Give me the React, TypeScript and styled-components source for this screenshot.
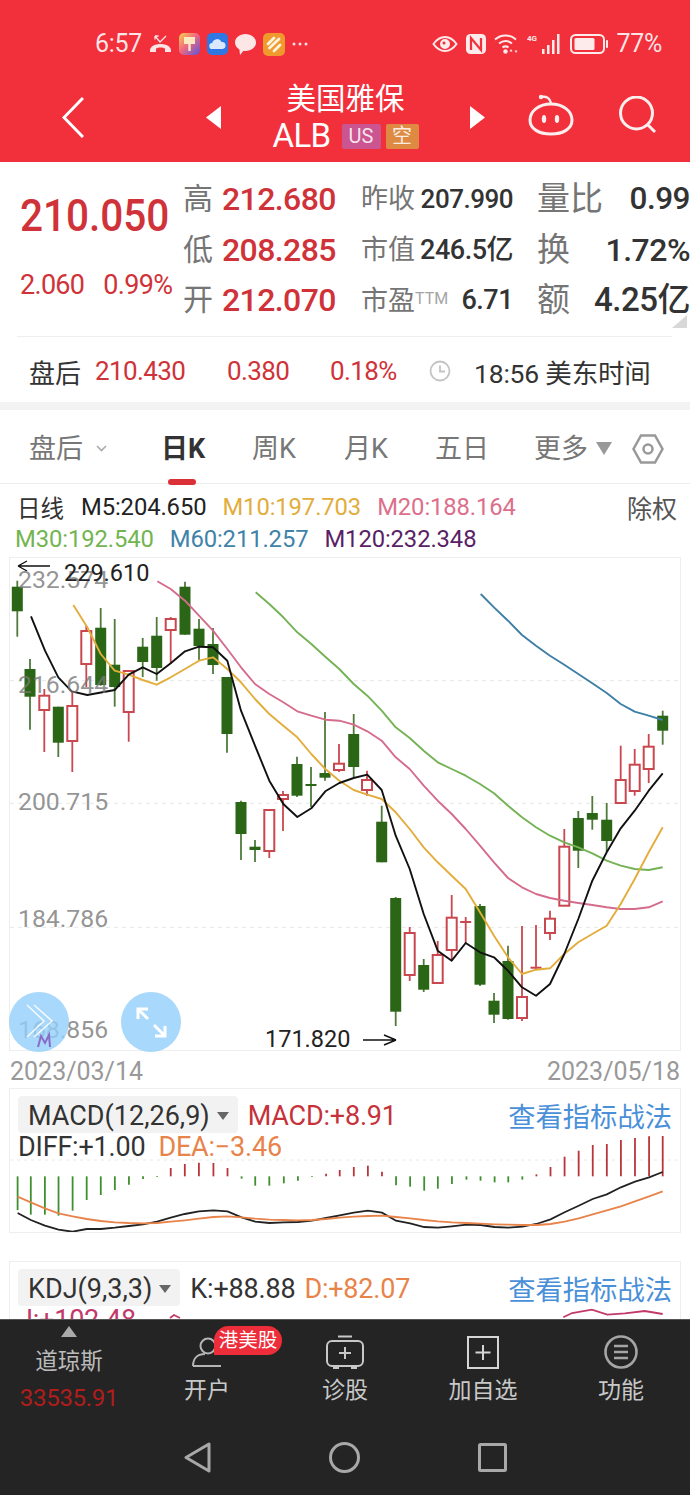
import { FC } from 'react';
import styled, { createGlobalStyle } from 'styled-components';

type Pt = [number, number];
type Candle = [number, number, number, number, number, 'g' | 'r'];

const zoomPts = (ox: number, oy: number, pts: Pt[], sx = 3, sy = 3): Pt[] =>
  pts.map(([x, y]) => [ox + x / sx, oy + y / sy]);

const toPath = (pts: Pt[]) => pts.map(([x, y]) => `${x.toFixed(1)},${y.toFixed(1)}`).join(' ');

const candles: Candle[] = [
  [17.3, 581.7, 637.7, 587.7, 612.3, 'g'],
  [30, 660, 730.7, 670, 697.7, 'g'],
  [44.3, 690, 753, 696.7, 711, 'r'],
  [58.3, 707.7, 758, 707.7, 743.7, 'g'],
  [72.3, 693, 773, 707, 742, 'r'],
  [86.3, 626.7, 688, 632, 665, 'r'],
  [100.7, 609, 686.7, 628.7, 686, 'g'],
  [114.7, 620, 707.7, 665.7, 688, 'g'],
  [128.7, 671.7, 742.7, 672, 713, 'r'],
  [142.7, 639, 678, 647.7, 663, 'g'],
  [156.7, 618, 681.7, 636.7, 669, 'g'],
  [170.7, 618, 665, 620, 631, 'r'],
  [185, 582.7, 635.7, 587.7, 635.7, 'g'],
  [199, 620, 661, 629.7, 647, 'g'],
  [213, 629, 675, 645, 666, 'g'],
  [227, 678, 753.7, 678, 735, 'g'],
  [241, 801.7, 861, 803, 835, 'g'],
  [255, 841, 863, 847.7, 851, 'g'],
  [269.3, 811, 859, 811, 852, 'r'],
  [283, 792, 832, 796, 800, 'r'],
  [297, 757.7, 798, 765, 796.7, 'g'],
  [311, 768, 808, 785, 787, 'g'],
  [325, 713, 781.7, 774, 778.7, 'g'],
  [339, 745, 773, 764.7, 771, 'r'],
  [353.7, 715, 778, 735, 768, 'g'],
  [367, 771.7, 796.7, 781, 791, 'r'],
  [381.7, 806.7, 863.3, 822.7, 863.3, 'g'],
  [395.7, 898, 1027, 899, 1012.7, 'g'],
  [409.7, 928, 982, 934, 976, 'r'],
  [423.7, 960, 993, 966, 990.7, 'g'],
  [437.7, 942, 984, 956, 984, 'r'],
  [451.7, 896, 961.7, 918.7, 951, 'r'],
  [465.7, 918, 945, 922, 924, 'r'],
  [480, 905, 987, 907, 985.7, 'g'],
  [494, 994, 1024, 1001.7, 1015.7, 'g'],
  [508, 946.7, 1020.7, 962, 1020, 'g'],
  [522, 927, 1022, 998, 1019, 'r'],
  [536, 926, 970, 967.7, 969.7, 'r'],
  [550, 911.7, 941, 919.7, 934, 'r'],
  [564.3, 830, 906.7, 847.7, 906.7, 'r'],
  [578.3, 812, 869, 819, 851.7, 'g'],
  [592.3, 797, 830.7, 814, 820.7, 'g'],
  [606.7, 804, 853, 820.7, 842, 'g'],
  [620.7, 746.7, 805, 781, 804, 'r'],
  [634.7, 750, 796.7, 765.7, 792, 'r'],
  [648.7, 735, 784, 747.7, 770, 'r'],
  [662.7, 711.7, 745.7, 716.7, 731.7, 'g']
];

const m5 = [
  ...zoomPts(0, 555, [[93, 187], [135, 290], [175, 370], [215, 412], [262, 423], [344, 408], [386, 362], [428, 340], [470, 360], [512, 328], [555, 292], [597, 278], [639, 280], [682, 320], [723, 470], [765, 575], [808, 680], [850, 750], [892, 789], [934, 763], [976, 712], [1018, 687]]),
  ...zoomPts(345, 555, [[26, 672], [67, 662], [110, 708]]),
  ...zoomPts(345, 780, [[152, 170], [194, 270], [236, 405], [278, 515], [320, 545], [362, 492], [405, 520], [447, 535], [489, 575], [531, 625], [573, 650], [615, 615], [658, 525], [700, 420], [742, 305], [785, 220], [827, 148], [869, 95], [911, 35]]),
  ...zoomPts(345, 555, [[953, 658]])
];

const m10 = [
  ...zoomPts(0, 555, [[220, 153], [262, 220], [302, 300], [344, 350], [386, 362], [428, 378], [470, 392], [512, 370], [555, 345], [597, 320], [639, 310], [682, 345], [723, 385], [765, 435], [808, 480], [850, 515], [892, 550], [934, 600], [976, 645], [1018, 680]]),
  ...zoomPts(345, 555, [[26, 708], [67, 722], [110, 735], [152, 775]]),
  ...zoomPts(345, 780, [[194, 150], [236, 205], [278, 250], [320, 290], [362, 330], [405, 400], [447, 470], [489, 535], [531, 585], [573, 572], [615, 568], [658, 525], [700, 490], [742, 465], [785, 440], [827, 375], [869, 300], [911, 220], [953, 145]])
];

const m20 = [
  ...zoomPts(0, 555, [[472, 82], [512, 105], [555, 140], [597, 185], [639, 230], [682, 285], [723, 340], [765, 390], [808, 420], [850, 445], [892, 472], [934, 485], [976, 497], [1018, 500]]),
  ...zoomPts(345, 555, [[26, 512], [67, 532], [110, 560], [152, 610], [194, 645], [236, 695], [278, 740], [320, 780]]),
  ...zoomPts(345, 780, [[362, 150], [405, 200], [447, 250], [489, 297], [531, 325], [573, 345], [615, 357], [658, 365], [700, 372], [742, 378], [785, 385], [827, 390], [869, 390], [911, 385], [953, 367]])
];

const m30 = [
  ...zoomPts(0, 555, [[767, 115], [808, 150], [850, 190], [892, 235], [934, 270], [976, 308], [1018, 345]]),
  ...zoomPts(345, 555, [[26, 390], [67, 425], [110, 470], [152, 520], [194, 552], [236, 590], [278, 625], [320, 645], [362, 665], [405, 690], [447, 718], [489, 755], [531, 790], [573, 820], [615, 845], [658, 865], [700, 880]]),
  ...zoomPts(345, 780, [[742, 223], [785, 245], [827, 260], [869, 270], [911, 273], [953, 265]])
];

const m60 = zoomPts(345, 555, [[407, 120], [447, 160], [489, 200], [531, 243], [573, 275], [615, 305], [658, 332], [700, 360], [742, 388], [785, 417], [827, 450], [869, 473], [911, 485], [953, 498]]);

const macdZero = 277;
const macdBars: Pt[] = [[40, 378], [70, 392], [102, 392], [133, 395], [165, 380], [197, 348], [229, 333], [261, 318], [293, 302], [325, 285], [357, 279], [388, 252], [420, 240], [452, 236], [485, 237], [517, 252], [549, 284], [580, 305], [612, 305], [645, 298], [677, 290], [709, 279], [741, 269], [772, 258], [804, 249], [836, 245], [868, 263], [900, 304], [932, 308], [964, 320], [995, 314], [1027, 300], [1060, 287], [1092, 290], [1124, 295], [1155, 295], [1187, 287], [1219, 271], [1251, 249], [1283, 218], [1315, 200], [1347, 183], [1379, 180], [1411, 168], [1443, 162], [1475, 157], [1506, 156]];
const diffLine: Pt[] = [[40, 387], [70, 408], [102, 425], [133, 437], [165, 443], [197, 435], [229, 435], [261, 431], [293, 426], [325, 421], [357, 413], [388, 401], [420, 390], [452, 382], [485, 379], [517, 382], [549, 400], [580, 413], [612, 417], [645, 415], [677, 414], [709, 410], [741, 402], [772, 394], [804, 386], [836, 380], [868, 386], [900, 410], [932, 418], [964, 429], [995, 431], [1027, 427], [1060, 422], [1092, 423], [1124, 429], [1155, 431], [1187, 428], [1219, 420], [1251, 406], [1283, 385], [1315, 365], [1347, 345], [1379, 331], [1411, 310], [1443, 293], [1475, 280], [1506, 264]];
const deaLine: Pt[] = [[40, 338], [70, 355], [102, 373], [133, 388], [165, 397], [197, 405], [229, 411], [261, 415], [293, 417], [325, 418], [357, 417], [388, 413], [420, 409], [452, 404], [485, 399], [517, 397], [549, 400], [580, 404], [612, 407], [645, 408], [677, 409], [709, 408], [741, 405], [772, 401], [804, 398], [836, 396], [868, 395], [900, 399], [932, 403], [964, 408], [995, 412], [1027, 415], [1060, 417], [1092, 419], [1124, 421], [1155, 422], [1187, 423], [1219, 423], [1251, 420], [1283, 413], [1315, 403], [1347, 391], [1379, 379], [1411, 367], [1443, 352], [1475, 337], [1506, 322]];
const kdjLine: Pt[] = [[1280, 700], [1300, 687], [1345, 677], [1380, 692], [1420, 688], [1465, 681], [1506, 690]];

const SX = 1568 / 690;
const mx = (x: number) => x / SX;
const my = (y: number) => 1085 + y / 3;
const macdPts = (pts: Pt[]): Pt[] => pts.map(([x, y]) => [mx(x), my(y)]);

const axisLabels = [
  { text: '232.574', y: 581 },
  { text: '216.644', y: 686 },
  { text: '200.715', y: 803 },
  { text: '184.786', y: 920 },
  { text: '168.856', y: 1031 }
];

const GlobalStyle = createGlobalStyle`
  html, body { margin: 0; padding: 0; background: #fff; }
  body { font-family: Roboto, "Noto Sans CJK SC", sans-serif; }
`;

const Screen = styled.div`
  width: 690px;
  height: 1495px;
  display: flex;
  flex-direction: column;
  overflow: hidden;
  background: #fff;
  font-family: Roboto, "Noto Sans CJK SC", sans-serif;
`;

const Content = styled.div`
  flex: 1;
  min-height: 0;
  overflow: hidden;
`;

const Header = styled.header`
  height: 162px;
  box-sizing: border-box;
  background: #f2303c;
  color: #fff;
`;

const StatusBar = styled.div`
  height: 80px;
  box-sizing: border-box;
  padding: 26px 28px 18px 95px;
  display: flex;
  justify-content: space-between;
  align-items: center;
`;

const StatusGroup = styled.div<{ $gap: number }>`
  display: flex;
  align-items: center;
  gap: ${(p) => p.$gap}px;
`;

const StatusText = styled.span`
  font-size: 25px;
  line-height: 36px;
  color: rgba(255, 255, 255, 0.88);
  letter-spacing: -0.3px;
`;

const NavRow = styled.div`
  height: 74px;
  display: grid;
  grid-template-columns: 206px 279px 205px;
  align-items: center;
`;

const NavLeft = styled.div`
  padding-left: 62px;
  display: flex;
  align-items: center;
`;

const NavRight = styled.div`
  padding: 0 0 5px 43px;
  display: flex;
  align-items: center;
  gap: 45px;
`;

const NavCenter = styled.div`
  display: flex;
  justify-content: space-between;
  align-items: center;
`;

const Titles = styled.div`
  display: flex;
  flex-direction: column;
  align-items: center;
`;

const StockName = styled.div`
  font-size: 29.5px;
  line-height: 38px;
  color: #fff;
`;

const TickerRow = styled.div`
  display: flex;
  align-items: center;
  height: 36px;
  gap: 5px;
`;

const Ticker = styled.span`
  font-size: 33px;
  line-height: 36px;
  margin-right: 6px;
  letter-spacing: -0.6px;
`;

const Tag = styled.span<{ $bg: string; $w: number }>`
  width: ${(p) => p.$w}px;
  height: 25px;
  line-height: 25px;
  text-align: center;
  font-size: 20px;
  background: ${(p) => p.$bg};
  color: rgba(255, 255, 255, 0.85);
  border-radius: 2px;
`;

const Quote = styled.section`
  position: relative;
  height: 174px;
  box-sizing: border-box;
  padding-top: 12px;
  display: flex;
`;

const QuoteMain = styled.div`
  width: 183px;
  flex: none;
  box-sizing: border-box;
  padding-left: 20px;
`;

const BigPrice = styled.div`
  margin-top: 17px;
  font-size: 45px;
  line-height: 50px;
  font-weight: 500;
  color: #cf3339;
  white-space: nowrap;
  transform: scaleX(0.9);
  transform-origin: left center;
`;

const Change = styled.div`
  margin-top: 26px;
  display: flex;
  gap: 19px;
  font-size: 27px;
  line-height: 36px;
  color: #cf3339;
  letter-spacing: -0.7px;
  white-space: nowrap;
`;

const StatGrid = styled.div`
  flex: 1;
  display: grid;
  grid-template-columns: 178px 176px 153px;
  grid-auto-rows: 50.5px;
  align-items: center;
`;

const StatCell = styled.div<{ $w?: number; $between?: boolean }>`
  display: flex;
  align-items: center;
  white-space: nowrap;
  ${(p) => (p.$w ? `width: ${p.$w}px;` : '')}
  ${(p) => (p.$between ? 'justify-content: space-between;' : 'gap: 9px;')}
`;

const StatLabel = styled.span<{ $size: number }>`
  font-size: ${(p) => p.$size}px;
  line-height: 44px;
  color: #757575;
`;

const Ttm = styled.span`
  font-size: 16px;
  vertical-align: 6px;
  color: #a5a5a5;
`;

const RedValue = styled.span`
  font-size: 32px;
  line-height: 44px;
  font-weight: 500;
  color: #cf3339;
  letter-spacing: -0.6px;
`;

const DarkValue = styled.span<{ $size: number }>`
  font-size: ${(p) => p.$size}px;
  line-height: 44px;
  font-weight: 500;
  color: #333;
  letter-spacing: -0.5px;
`;

const CornerMark = styled.i`
  position: absolute;
  right: 3px;
  top: 153px;
  width: 0;
  height: 0;
  border-style: solid;
  border-width: 0 0 13px 15px;
  border-color: transparent transparent #d8d8d8 transparent;
`;

const Divider = styled.div`
  height: 1px;
  margin: 0 18px 0 17px;
  background: #eeeeee;
`;

const AfterRow = styled.div`
  height: 65px;
  box-sizing: border-box;
  padding: 3px 0 0 29px;
  display: flex;
  align-items: center;
  white-space: nowrap;
`;

const AfterLabel = styled.span`
  width: 66px;
  font-size: 26px;
  color: #333;
`;

const AfterValue = styled.span<{ $w: number }>`
  width: ${(p) => p.$w}px;
  font-size: 26px;
  color: #cf3339;
  letter-spacing: -0.6px;
`;

const AfterTime = styled.span`
  margin-left: 23px;
  font-size: 26.5px;
  color: #333;
  letter-spacing: -0.2px;
`;

const Band = styled.div`
  height: 8px;
  background: #f3f3f3;
`;

const Tabs = styled.nav`
  height: 74px;
  box-sizing: border-box;
  padding: 4px 0 0 29px;
  display: grid;
  grid-template-columns: 132px 91px 92px 91px 99px 98px auto;
  align-items: center;
  border-bottom: 1px solid #eeeeee;
`;

const Tab = styled.div<{ $active?: boolean }>`
  position: relative;
  display: flex;
  align-items: center;
  font-size: 27px;
  line-height: 40px;
  white-space: nowrap;
  color: ${(p) => (p.$active ? '#333' : '#777')};
  font-weight: ${(p) => (p.$active ? 700 : 400)};
  ${(p) =>
    p.$active
      ? `&::after {
    content: '';
    position: absolute;
    left: 7px;
    bottom: -16px;
    width: 28px;
    height: 6px;
    border-radius: 3px;
    background: #dc3038;
  }`
      : ''}
`;

const Legend = styled.div`
  height: 73px;
  box-sizing: border-box;
  padding-top: 7px;
`;

const LegendRow = styled.div<{ $left: number; $gap: number }>`
  height: 32px;
  padding-left: ${(p) => p.$left}px;
  padding-right: 13px;
  display: flex;
  align-items: center;
  gap: ${(p) => p.$gap}px;
  white-space: nowrap;
`;

const LegendTitle = styled.span`
  font-size: 23.5px;
  color: #333;
  margin-right: 1px;
`;

const LegendValue = styled.span<{ $color: string }>`
  font-size: 23.8px;
  color: ${(p) => p.$color};
  letter-spacing: -0.1px;
`;

const LegendAction = styled.span`
  margin-left: auto;
  font-size: 25px;
  color: #555;
`;

const ChartFrame = styled.div`
  position: relative;
  height: 494px;
  margin: 0 9px;
  box-sizing: border-box;
  border: 1px solid #eeeeee;
`;

const ChartSvg = styled.svg`
  display: block;
  width: 670px;
  height: 492px;
`;

const AxisLabel = styled.span<{ $y: number }>`
  position: absolute;
  left: 8px;
  top: ${(p) => p.$y - 559 - 14}px;
  font-size: 24.8px;
  line-height: 28px;
  color: rgba(120, 120, 120, 0.8);
`;

const ExtremeLabel = styled.span<{ $x: number; $y: number }>`
  position: absolute;
  left: ${(p) => p.$x - 10}px;
  top: ${(p) => p.$y - 559 - 14}px;
  font-size: 23.5px;
  line-height: 28px;
  color: #222;
`;

const FloatButton = styled.div<{ $x: number }>`
  position: absolute;
  left: ${(p) => p.$x - 40}px;
  bottom: -2px;
  width: 60px;
  height: 60px;
  border-radius: 50%;
  background: rgba(146, 206, 250, 0.8);
  display: flex;
  align-items: center;
  justify-content: center;
`;

const DateRow = styled.div`
  height: 37px;
  box-sizing: border-box;
  padding: 3px 10px 0;
  display: flex;
  justify-content: space-between;
  align-items: center;
  font-size: 25px;
  color: #999;
`;

const Panel = styled.div<{ $h: number; $gapTop?: number }>`
  position: relative;
  height: ${(p) => p.$h}px;
  margin: ${(p) => p.$gapTop ?? 0}px 9px 0;
  box-sizing: border-box;
  border: 1px solid #eeeeee;
  padding: 7px 8px 0 8px;
`;

const PanelHead = styled.div`
  position: relative;
  display: flex;
  align-items: center;
  height: 37px;
  white-space: nowrap;
`;

const Selector = styled.div`
  height: 37px;
  box-sizing: border-box;
  padding: 3px 9px 0 10px;
  display: flex;
  align-items: center;
  gap: 7px;
  background: #f2f2f2;
  border-radius: 4px;
  font-size: 27px;
  color: #333;
  margin-right: 10px;
`;

const DownMark = styled.i`
  width: 0;
  height: 0;
  border-style: solid;
  border-width: 8px 6px 0 6px;
  border-color: #666 transparent transparent transparent;
`;

const PanelValue = styled.span<{ $color: string; $mr?: number }>`
  font-size: 27px;
  line-height: 32px;
  padding-top: 3px;
  color: ${(p) => p.$color};
  margin-right: ${(p) => p.$mr ?? 13}px;
  letter-spacing: -0.2px;
`;

const PanelLink = styled.a`
  margin-left: auto;
  font-size: 27.3px;
  color: #4a90d9;
`;

const PanelValues = styled.div`
  position: relative;
  display: flex;
  height: 24px;
  align-items: center;
  white-space: nowrap;
`;

const PanelSvg = styled.svg`
  position: absolute;
  left: 0;
  top: 0;
  width: 670px;
`;

const BottomBar = styled.footer`
  height: 176px;
  flex: none;
  background: #242424;
  border-top: 1px solid #555;
  box-sizing: border-box;
`;

const BarRow = styled.div`
  height: 100px;
  display: grid;
  grid-template-columns: repeat(5, 138px);
`;

const IndexCell = styled.div`
  display: flex;
  flex-direction: column;
  align-items: center;
  padding-top: 6px;
`;

const UpMark = styled.i`
  width: 0;
  height: 0;
  border-style: solid;
  border-width: 0 8px 11px 8px;
  border-color: transparent transparent #aaa transparent;
`;

const IndexName = styled.span`
  margin-top: 8px;
  font-size: 22.5px;
  line-height: 32px;
  color: #bbb;
`;

const IndexValue = styled.span`
  margin-top: 6px;
  font-size: 24px;
  line-height: 30px;
  color: #b01d1d;
  letter-spacing: -0.3px;
`;

const BarItem = styled.div`
  display: flex;
  flex-direction: column;
  align-items: center;
  padding-top: 15px;
`;

const IconSlot = styled.div`
  position: relative;
  height: 34px;
  display: flex;
  align-items: center;
  justify-content: center;
`;

const BarLabel = styled.span`
  margin-top: 7px;
  font-size: 23px;
  line-height: 30px;
  color: #c8c8c8;
`;

const Badge = styled.span`
  position: absolute;
  left: 22px;
  top: -9px;
  width: 68px;
  height: 29px;
  border-radius: 15px 15px 15px 0;
  background: #ee2d3a;
  color: #fff;
  font-size: 19.5px;
  line-height: 29px;
  text-align: center;
  white-space: nowrap;
`;

const SystemRow = styled.div`
  height: 75px;
  display: flex;
  justify-content: center;
  align-items: center;
  gap: 118px;
`;

const MoreMark = styled.i`
  margin-left: 8px;
  width: 0;
  height: 0;
  border-style: solid;
  border-width: 13px 8.5px 0 8.5px;
  border-color: #999 transparent transparent transparent;
`;

const Candles: FC = () => (
  <>
    {candles.map(([x, wt, wb, bt, bb, kind]) => {
      const color = kind === 'g' ? '#2b6616' : '#c9474e';
      const wick = kind === 'g' ? '#4f7a3c' : '#c9474e';
      const thin = bb - bt < 4;
      return (
        <g key={x}>
          <line x1={x} x2={x} y1={wt} y2={wb} stroke={wick} strokeWidth={1.8} />
          {kind === 'g' || thin ? (
            <rect x={x - 5.5} y={bt} width={11} height={bb - bt} fill={color} />
          ) : (
            <rect x={x - 5} y={bt} width={10} height={bb - bt} fill="#fff" stroke={color} strokeWidth={2} />
          )}
        </g>
      );
    })}
  </>
);

const MissedCall = () => (
  <svg width="23" height="18" viewBox="0 0 23 18" fill="none" stroke="#fde3e3" strokeWidth="1.3">
    <path d="M6 1l5 6 6-6M6 1v3.500M6 1h3.500" />
    <path d="M1 15c1-8 20-8 21 0v2h-6v-3.500c-2-1.500-7-1.500-9 0V17H1z" fill="#fde3e3" stroke="none" />
  </svg>
);

const PaintApp = () => (
  <svg width="21" height="22" viewBox="0 0 21 22">
    <defs>
      <linearGradient id="paint" x1="0" y1="0" x2="1" y2="1">
        <stop offset="0" stopColor="#f6d24a" />
        <stop offset=".45" stopColor="#f26a80" />
        <stop offset="1" stopColor="#5a55d8" />
      </linearGradient>
    </defs>
    <rect width="21" height="22" rx="5" fill="url(#paint)" />
    <path d="M5 4h11v7H5zM9.300 11h2.400v7H9.300z" fill="#fdf6c8" opacity=".9" />
  </svg>
);

const CloudApp = () => (
  <svg width="21" height="22" viewBox="0 0 21 22">
    <rect width="21" height="22" rx="5" fill="#2f78e4" />
    <path d="M5.500 16a3 3 0 0 1-.3-6 5 5 0 0 1 9.400-1 3.500 3.500 0 0 1 .8 7z" fill="#dbe9ff" />
  </svg>
);

const ChatApp = () => (
  <svg width="21" height="21" viewBox="0 0 21 21">
    <path d="M10.500 0C16.300 0 21 3.700 21 8.500S16.300 17 10.500 17c-.7 0-1.400-.1-2-.2L5 21l-.6-5.600C1.700 13.900 0 11.400 0 8.500 0 3.700 4.700 0 10.500 0z" fill="#fde6e6" />
  </svg>
);

const NoteApp = () => (
  <svg width="22" height="23" viewBox="0 0 22 23">
    <rect width="22" height="23" rx="5" fill="#f09a2e" />
    <path d="M5 11l6-6M6.500 15L16 6M11 18l6-6" stroke="#fff3dc" strokeWidth="2.800" strokeLinecap="round" />
  </svg>
);

const Dots = () => (
  <svg width="16" height="4" viewBox="0 0 16 4" fill="rgba(255,255,255,.85)">
    <circle cx="2" cy="2" r="1.500" />
    <circle cx="8" cy="2" r="1.500" />
    <circle cx="14" cy="2" r="1.500" />
  </svg>
);

const Eye = () => (
  <svg width="26" height="16" viewBox="0 0 26 16" fill="none" stroke="#fdeaea" strokeWidth="2">
    <path d="M1.500 8C5 3 9 1 13 1s8 2 11.500 7C21 13 17 15 13 15S5 13 1.500 8z" />
    <circle cx="13" cy="8" r="4" fill="#fdeaea" />
    <circle cx="12" cy="7" r="1.500" fill="#f2303c" stroke="none" />
  </svg>
);

const Nfc = () => (
  <svg width="20" height="20" viewBox="0 0 20 20">
    <rect width="20" height="20" rx="4.500" fill="#fdeaea" />
    <path d="M5 16V4l10 12V4" fill="none" stroke="#f2303c" strokeWidth="2.200" />
  </svg>
);

const Wifi = () => (
  <svg width="25" height="20" viewBox="0 0 25 20" fill="none" stroke="#fdeaea" strokeWidth="2">
    <path d="M1 5.500c6-5.500 15-5.500 21 0M5 9.500c4-3 9-3 13 0M8.500 13.500c2-1.500 4-1.500 6 0" />
    <circle cx="11.500" cy="17.500" r="2.200" fill="#fdeaea" stroke="none" />
    <path d="M17 15l-1.500 2.500h3zM22 19l1.500-2.500h-3z" fill="#fdeaea" stroke="none" />
  </svg>
);

const SignalLabel = styled.text`
  font-size: 8px;
  font-weight: 700;
  fill: #fdeaea;
`;

const Signal = () => (
  <svg width="35" height="22" viewBox="0 0 35 22" fill="#fdeaea">
    <SignalLabel x="0" y="8">4G</SignalLabel>
    <rect x="15" y="16" width="2.500" height="5" />
    <rect x="20" y="12" width="2.500" height="9" />
    <rect x="25" y="7" width="2.500" height="14" />
    <rect x="30" y="1" width="2.500" height="20" />
  </svg>
);

const Battery = () => (
  <svg width="38" height="20" viewBox="0 0 38 20" fill="none">
    <rect x="1" y="1" width="33" height="18" rx="4.500" stroke="#fdeaea" strokeWidth="2" />
    <rect x="4.500" y="4" width="20" height="12" rx="1.500" fill="#fdeaea" />
    <rect x="36" y="6" width="2" height="8" rx="1" fill="#fdeaea" />
  </svg>
);

const BackArrow = () => (
  <svg width="22" height="41" viewBox="0 0 22 41" fill="none" stroke="#fff" strokeWidth="3">
    <path d="M21 1L2 20.500 21 40" />
  </svg>
);

const SideArrow: FC<{ $dir: 'l' | 'r' }> = ({ $dir }) => (
  <svg width="15" height="23" viewBox="0 0 15 23" fill="#fff">
    <path d={$dir === 'l' ? 'M15 0v23L0 11.500z' : 'M0 0v23l15-11.500z'} />
  </svg>
);

const RobotIcon = () => (
  <svg width="46" height="42" viewBox="0 0 46 42" fill="none" stroke="#fdeeee" strokeWidth="3">
    <path d="M13 3c6-1 9 1 10 7" strokeWidth="2.400" />
    <circle cx="13" cy="3" r="2.200" fill="#fdeeee" stroke="none" />
    <path d="M23 10c12 0 21 7 21 16 0 9-9 14-21 14S2 35 2 26c0-9 9-16 21-16z" />
    <ellipse cx="16" cy="25" rx="2.200" ry="4" fill="#fdeeee" stroke="none" />
    <ellipse cx="29" cy="25" rx="2.200" ry="4" fill="#fdeeee" stroke="none" />
  </svg>
);

const SearchIcon = () => (
  <svg width="38" height="38" viewBox="0 0 38 38" fill="none" stroke="#fdeeee" strokeWidth="3">
    <circle cx="17.500" cy="17" r="16" />
    <path d="M29 29l7 7" />
  </svg>
);

const ClockIcon = () => (
  <svg width="22" height="22" viewBox="0 0 22 22" fill="none" stroke="#c4c4c4" strokeWidth="1.800">
    <circle cx="11" cy="11" r="9.500" />
    <path d="M11 5.500V11.500H16" />
  </svg>
);

const Chevron = () => (
  <svg width="11" height="7" viewBox="0 0 11 7" fill="none" stroke="#aaa" strokeWidth="1.600">
    <path d="M1 1l4.500 4.500L10 1" />
  </svg>
);

const HexIcon = () => (
  <svg width="32" height="30" viewBox="0 0 32 30" fill="none" stroke="#999" strokeWidth="2.500">
    <path d="M9 1.500h14L30.500 15 23 28.500H9L1.500 15z" />
    <circle cx="16" cy="15" r="4.500" />
  </svg>
);

const PersonIcon = () => (
  <svg width="30" height="30" viewBox="0 0 30 30" fill="none" stroke="#b5b5b5" strokeWidth="2">
    <circle cx="16" cy="9" r="7.500" />
    <path d="M1 29c0-8 5-12 12-12M1 29h28" />
  </svg>
);

const DiagnoseIcon = () => (
  <svg width="38" height="34" viewBox="0 0 38 34" fill="none" stroke="#c8c8c8" strokeWidth="2">
    <path d="M12 1.500h14" />
    <rect x="1" y="6" width="36" height="25" rx="5" />
    <path d="M19 12v12M13 18h12" />
    <path d="M7 33h6M25 33h6" strokeWidth="2.600" />
  </svg>
);

const AddIcon = () => (
  <svg width="32" height="33" viewBox="0 0 32 33" fill="none" stroke="#d5d5d5" strokeWidth="2">
    <rect x="1" y="1" width="30" height="31" />
    <path d="M16 9v15M8.500 16.500h15" />
  </svg>
);

const MenuIcon = () => (
  <svg width="34" height="34" viewBox="0 0 34 34" fill="none" stroke="#a5a5a5">
    <circle cx="17" cy="17" r="15.500" strokeWidth="2.600" />
    <path d="M10 11h14M10 17h14M10 23h14" strokeWidth="2.600" />
  </svg>
);

const SysBack = () => (
  <svg width="27" height="31" viewBox="0 0 27 31" fill="none" stroke="#a8a8a8" strokeWidth="3" strokeLinejoin="round">
    <path d="M25 2v27L2 15.500z" />
  </svg>
);

const SysHome = () => (
  <svg width="31" height="31" viewBox="0 0 31 31" fill="none" stroke="#a8a8a8" strokeWidth="3">
    <circle cx="15.500" cy="15.500" r="14" />
  </svg>
);

const SysRecent = () => (
  <svg width="29" height="29" viewBox="0 0 29 29" fill="none" stroke="#a8a8a8" strokeWidth="3" strokeLinejoin="round">
    <rect x="1.500" y="1.500" width="26" height="26" rx="1" />
  </svg>
);

export default function App() {
  const axisY = [681.7, 804.3, 928.3];
  const macdBase = my(macdZero);
  return (
    <>
      <GlobalStyle />
      <Screen>
        <Content>
          <Header>
            <StatusBar>
              <StatusGroup $gap={7}>
                <StatusText>6:57</StatusText>
                <MissedCall />
                <PaintApp />
                <CloudApp />
                <ChatApp />
                <NoteApp />
                <Dots />
              </StatusGroup>
              <StatusGroup $gap={8}>
                <Eye />
                <Nfc />
                <Wifi />
                <Signal />
                <Battery />
                <StatusText>77%</StatusText>
              </StatusGroup>
            </StatusBar>
            <NavRow>
              <NavLeft>
                <BackArrow />
              </NavLeft>
              <NavCenter>
                <SideArrow $dir="l" />
                <Titles>
                  <StockName>美国雅保</StockName>
                  <TickerRow>
                    <Ticker>ALB</Ticker>
                    <Tag $bg="#cb5590" $w={39}>US</Tag>
                    <Tag $bg="#df8a42" $w={33}>空</Tag>
                  </TickerRow>
                </Titles>
                <SideArrow $dir="r" />
              </NavCenter>
              <NavRight>
                <RobotIcon />
                <SearchIcon />
              </NavRight>
            </NavRow>
          </Header>

          <Quote>
            <QuoteMain>
              <BigPrice>210.050</BigPrice>
              <Change>
                <span>2.060</span>
                <span>0.99%</span>
              </Change>
            </QuoteMain>
            <StatGrid>
              <StatCell>
                <StatLabel $size={30}>高</StatLabel>
                <RedValue>212.680</RedValue>
              </StatCell>
              <StatCell $w={152} $between>
                <StatLabel $size={27}>昨收</StatLabel>
                <DarkValue $size={26}>207.990</DarkValue>
              </StatCell>
              <StatCell $w={153} $between>
                <StatLabel $size={33}>量比</StatLabel>
                <DarkValue $size={31.5}>0.99</DarkValue>
              </StatCell>
              <StatCell>
                <StatLabel $size={30}>低</StatLabel>
                <RedValue>208.285</RedValue>
              </StatCell>
              <StatCell $w={152} $between>
                <StatLabel $size={27}>市值</StatLabel>
                <DarkValue $size={27}>246.5亿</DarkValue>
              </StatCell>
              <StatCell $w={153} $between>
                <StatLabel $size={33}>换</StatLabel>
                <DarkValue $size={32}>1.72%</DarkValue>
              </StatCell>
              <StatCell>
                <StatLabel $size={30}>开</StatLabel>
                <RedValue>212.070</RedValue>
              </StatCell>
              <StatCell $w={152} $between>
                <StatLabel $size={27}>
                  市盈<Ttm>TTM</Ttm>
                </StatLabel>
                <DarkValue $size={27}>6.71</DarkValue>
              </StatCell>
              <StatCell $w={153} $between>
                <StatLabel $size={33}>额</StatLabel>
                <DarkValue $size={33}>4.25亿</DarkValue>
              </StatCell>
            </StatGrid>
            <CornerMark />
          </Quote>
          <Divider />
          <AfterRow>
            <AfterLabel>盘后</AfterLabel>
            <AfterValue $w={132}>210.430</AfterValue>
            <AfterValue $w={103}>0.380</AfterValue>
            <AfterValue $w={99}>0.18%</AfterValue>
            <ClockIcon />
            <AfterTime>18:56 美东时间</AfterTime>
          </AfterRow>
          <Band />

          <Tabs>
            <Tab>
              盘后&nbsp;&nbsp;
              <Chevron />
            </Tab>
            <Tab $active>日K</Tab>
            <Tab>周K</Tab>
            <Tab>月K</Tab>
            <Tab>五日</Tab>
            <Tab>
              更多
              <MoreMark />
            </Tab>
            <HexIcon />
          </Tabs>

          <Legend>
            <LegendRow $left={17} $gap={16}>
              <LegendTitle>日线</LegendTitle>
              <LegendValue $color="#222">M5:204.650</LegendValue>
              <LegendValue $color="#e2ad3c">M10:197.703</LegendValue>
              <LegendValue $color="#dc6f8c">M20:188.164</LegendValue>
              <LegendAction>除权</LegendAction>
            </LegendRow>
            <LegendRow $left={15} $gap={16}>
              <LegendValue $color="#72b551">M30:192.540</LegendValue>
              <LegendValue $color="#3f83a8">M60:211.257</LegendValue>
              <LegendValue $color="#5a1f66">M120:232.348</LegendValue>
            </LegendRow>
          </Legend>

          <ChartFrame>
            <ChartSvg viewBox="10 559 670 492">
              {axisY.map((y) => (
                <line key={y} x1={10} x2={680} y1={y} y2={y} stroke="#e8e8e8" strokeDasharray="4 4" />
              ))}
              <Candles />
              <g fill="none" strokeWidth={1.9} strokeLinejoin="round">
                <polyline points={toPath(m60)} stroke="#3e7fa6" />
                <polyline points={toPath(m30)} stroke="#74b355" />
                <polyline points={toPath(m20)} stroke="#d56c8c" />
                <polyline points={toPath(m10)} stroke="#e3ad3c" />
                <polyline points={toPath(m5)} stroke="#111" />
              </g>
              <path d="M18 567h32M18 567l9-5M18 567l9 5" fill="none" stroke="#111" strokeWidth={1.4} />
              <path d="M363 1041h33M396 1041l-12-5M396 1041l-12 5" fill="none" stroke="#111" strokeWidth={1.4} />
            </ChartSvg>
            {axisLabels.map((l) => (
              <AxisLabel key={l.text} $y={l.y}>
                {l.text}
              </AxisLabel>
            ))}
            <ExtremeLabel $x={64} $y={574}>229.610</ExtremeLabel>
            <ExtremeLabel $x={265} $y={1040}>171.820</ExtremeLabel>
            <FloatButton $x={39}>
              <svg width="60" height="60" viewBox="0 0 60 60" fill="none">
                <path d="M18 13l17 16-17 16M25 13l18 16-18 16" stroke="#fff" strokeWidth="1.600" opacity=".85" />
                <path d="M29 55l3-11 4 7 4-8 1 12" stroke="#8a6cc8" strokeWidth="2" />
              </svg>
            </FloatButton>
            <FloatButton $x={151}>
              <svg width="60" height="60" viewBox="0 0 60 60" fill="none" stroke="#fff" strokeWidth="3">
                <path d="M17 17l10 10M33 33l11 11M17 27V17h10M44 34v10H34" />
              </svg>
            </FloatButton>
          </ChartFrame>
          <DateRow>
            <span>2023/03/14</span>
            <span>2023/05/18</span>
          </DateRow>

          <Panel $h={145}>
            <PanelSvg viewBox="10 1090 670 143" height="143">
              <line x1={10} x2={680} y1={1161} y2={1161} stroke="#e8e8e8" strokeDasharray="3 4" />
              {macdBars.map(([x, y]) => {
                const top = my(y);
                return (
                  <line
                    key={x}
                    x1={mx(x)}
                    x2={mx(x)}
                    y1={macdBase}
                    y2={top}
                    stroke={top < macdBase ? '#b9353b' : '#3f8f2f'}
                    strokeWidth={1.8}
                  />
                );
              })}
              <polyline points={toPath(macdPts(diffLine))} fill="none" stroke="#222" strokeWidth={1.8} />
              <polyline points={toPath(macdPts(deaLine))} fill="none" stroke="#e8834a" strokeWidth={1.8} />
            </PanelSvg>
            <PanelHead>
              <Selector>
                MACD(12,26,9)
                <DownMark />
              </Selector>
              <PanelValue $color="#c6313a">MACD:+8.91</PanelValue>
              <PanelLink>查看指标战法</PanelLink>
            </PanelHead>
            <PanelValues>
              <PanelValue $color="#333">DIFF:+1.00</PanelValue>
              <PanelValue $color="#e8834a">DEA:−3.46</PanelValue>
            </PanelValues>
          </Panel>

          <Panel $h={120} $gapTop={28}>
            <PanelSvg viewBox="10 1263 670 60" height="60">
              <polyline points={toPath(macdPts(kdjLine))} fill="none" stroke="#c2396b" strokeWidth={1.8} />
              <polyline points="170,1319 174,1316 180,1319" fill="none" stroke="#c2396b" strokeWidth={1.8} />
            </PanelSvg>
            <PanelHead>
              <Selector>
                KDJ(9,3,3)
                <DownMark />
              </Selector>
              <PanelValue $color="#333" $mr={9}>K:+88.88</PanelValue>
              <PanelValue $color="#e8834a">D:+82.07</PanelValue>
              <PanelLink>查看指标战法</PanelLink>
            </PanelHead>
            <PanelValues>
              <PanelValue $color="#c2396b">J:+102.48</PanelValue>
            </PanelValues>
          </Panel>
        </Content>

        <BottomBar>
          <BarRow>
            <IndexCell>
              <UpMark />
              <IndexName>道琼斯</IndexName>
              <IndexValue>33535.91</IndexValue>
            </IndexCell>
            <BarItem>
              <IconSlot>
                <PersonIcon />
                <Badge>港美股</Badge>
              </IconSlot>
              <BarLabel>开户</BarLabel>
            </BarItem>
            <BarItem>
              <IconSlot>
                <DiagnoseIcon />
              </IconSlot>
              <BarLabel>诊股</BarLabel>
            </BarItem>
            <BarItem>
              <IconSlot>
                <AddIcon />
              </IconSlot>
              <BarLabel>加自选</BarLabel>
            </BarItem>
            <BarItem>
              <IconSlot>
                <MenuIcon />
              </IconSlot>
              <BarLabel>功能</BarLabel>
            </BarItem>
          </BarRow>
          <SystemRow>
            <SysBack />
            <SysHome />
            <SysRecent />
          </SystemRow>
        </BottomBar>
      </Screen>
    </>
  );
}
